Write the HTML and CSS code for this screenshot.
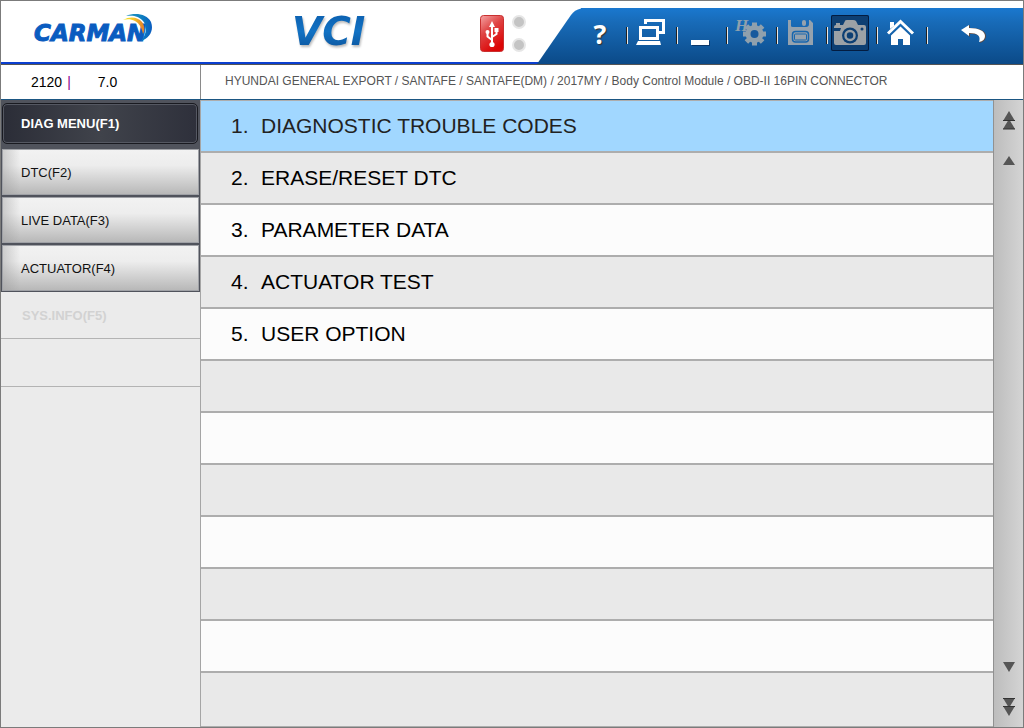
FILE: index.html
```html
<!DOCTYPE html>
<html lang="en">
<head>
<meta charset="utf-8">
<title>CARMAN VCI</title>
<link rel="stylesheet" href="styles.css">
</head>
<body>
<div class="app">
  <header class="header">
    <svg class="brand" width="124" height="34" viewBox="0 0 124 34" role="img" aria-label="CARMAN">
      <defs>
        <linearGradient id="arc" x1="0" x2="1"><stop offset="0" stop-color="#2a9bc4"/><stop offset=".6" stop-color="#0d7fc0"/><stop offset="1" stop-color="#0a5cc0"/></linearGradient>
        <linearGradient id="sun" x1="0" x2="1"><stop offset="0" stop-color="#f7ea1c"/><stop offset=".5" stop-color="#f6c52a"/><stop offset="1" stop-color="#e07b2c"/></linearGradient>
      </defs>
      <text class="brand-text" x="1" y="28">CARMAN</text>
      <path d="M93 3C102-1 114 1 118 9C121 17 117 25 108 28C113 22 115 14 110 8C106 3 100 2 93 3Z" fill="url(#arc)"/>
      <path d="M90 7C97 3 105 4 109 9C112 13 112 18 110 21C109 15 106 10 102 8C98 6 94 6 90 7Z" fill="url(#sun)"/>
    </svg>
    <svg class="product" width="88" height="44" viewBox="0 0 88 44" role="img" aria-label="VCI">
      <defs><linearGradient id="vci" x1="0" y1="0" x2="0" y2="1"><stop offset="0" stop-color="#0b5cab"/><stop offset=".5" stop-color="#1272c4"/><stop offset="1" stop-color="#0c4f94"/></linearGradient></defs>
      <text class="product-text" x="3" y="34" fill="url(#vci)">VCI</text>
    </svg>
    <div class="status">
      <svg width="24" height="37" viewBox="0 0 24 37" role="img" aria-label="USB connected">
        <defs><linearGradient id="usb" x1="0" y1="0" x2=".5" y2="1"><stop offset="0" stop-color="#f5a5a5"/><stop offset=".45" stop-color="#df4444"/><stop offset="1" stop-color="#dc0505"/></linearGradient></defs>
        <rect x=".5" y=".5" width="23" height="36" rx="3" fill="url(#usb)" stroke="#c93030"/>
        <g fill="none" stroke="#fff" stroke-width="2"><path d="M12 29V10M12 25L7.500 21.500V17M12 22L16.500 19V15"/></g>
        <path d="M12 6L15 12H9ZM14.500 13H18.500V17H14.500Z" fill="#fff"/>
        <circle cx="7.500" cy="17" r="2" fill="#fff"/><circle cx="12" cy="29.500" r="2.600" fill="#fff"/>
      </svg>
      <div class="lamps"><span class="lamp"></span><span class="lamp"></span></div>
    </div>
    <svg class="toolbar-cap" width="44" height="56" viewBox="0 0 44 56" aria-hidden="true">
      <defs><linearGradient id="cap" x1="0" y1="0" x2="0" y2="1"><stop offset="0" stop-color="#1a78cf"/><stop offset=".25" stop-color="#186bb8"/><stop offset="1" stop-color="#0b4a88"/></linearGradient></defs>
      <path d="M0 56L34 7Q39 0 50 0V56Z" fill="url(#cap)"/>
    </svg>
    <nav class="toolbar" aria-label="Tools">
      <button class="tool tool-help" aria-label="Help">?</button>
      <span class="sep"></span>
      <button class="tool" aria-label="Connection">
        <svg width="38" height="36" viewBox="0 0 38 36"><g fill="none" stroke="#fff" stroke-width="3"><path d="M14.500 9V5.500H32.500V17.500H28"/><path d="M9.500 12.500H26.500V23.500H9.500Z"/></g><path d="M7 26H29L30 30H5Z" fill="#fff"/></svg>
      </button>
      <span class="sep"></span>
      <button class="tool" aria-label="Minimize"><svg width="38" height="36" viewBox="0 0 38 36"><path d="M11 26H29V31H11Z" fill="#0a376a"/><path d="M10 25H28V30H10Z" fill="#fff"/></svg></button>
      <span class="sep"></span>
      <button class="tool" aria-label="Settings" disabled>
        <svg width="38" height="36" viewBox="0 0 38 36"><path class="gear-teeth" d="M23.500 7.500V30.500M12 19H35M15.400 10.900L31.600 27.100M15.400 27.100L31.600 10.900"/><circle cx="23.500" cy="19" r="6.500" fill="none" stroke="#8fa0ad" stroke-width="5"/><circle cx="23.500" cy="19" r="4" fill="#16599d"/><text class="tool-h" x="4" y="16">H</text></svg>
      </button>
      <span class="sep"></span>
      <button class="tool" aria-label="Save" disabled>
        <svg width="38" height="36" viewBox="0 0 38 36"><path d="M7 5H10V11Q10 12 12 12H25Q28 12 28 9V5H29L32 8V30H7Z" fill="#95a2ae"/><rect x="21" y="5" width="4" height="6" rx="2" fill="#95a2ae"/><rect x="11.500" y="16.500" width="16" height="10.500" rx="3" fill="none" stroke="#1766ae" stroke-width="1.500"/><rect x="13.500" y="19" width="12" height="6" rx="1" fill="#95a2ae" stroke="#1766ae"/></svg>
      </button>
      <span class="sep"></span>
      <button class="tool tool-on" aria-label="Capture" aria-pressed="true">
        <svg width="38" height="36" viewBox="0 0 38 36"><path d="M3 12Q3 10 5 10H12L14 6Q14 5 16 5H22Q24 5 25 6L27 10H33Q35 10 35 12V28Q35 30 33 30H5Q3 30 3 28V16H9L10 13H3Z" fill="#9ba1a6"/><path d="M5 8H9V10H5Z" fill="#9ba1a6"/><circle cx="19" cy="20.500" r="8" fill="#0d3f73"/><circle cx="19" cy="20.500" r="4.500" fill="#0d3f73" stroke="#9ba1a6" stroke-width="2.500"/><circle cx="31" cy="14" r="1.500" fill="#0d3f73"/></svg>
      </button>
      <span class="sep"></span>
      <button class="tool" aria-label="Home">
        <svg width="38" height="36" viewBox="0 0 38 36"><path d="M9 7H13V11L9 14Z" fill="#fff"/><path d="M7 18.500L19.500 6.500L32 18.500" fill="none" stroke="#fff" stroke-width="3"/><path d="M19.500 11.500L29 20.500V30H22V24H17V30H10V20.500Z" fill="#fff"/></svg>
      </button>
      <span class="sep"></span>
      <button class="tool tool-back" aria-label="Back">
        <svg width="38" height="36" viewBox="0 0 38 36"><path d="M8 15L16 10V13C26 13 32 16 32 21Q32 26 26 28Q28 18 16 19V22Z" fill="#5d4a42"/><path d="M7 15L15 10V13C25 13 31 16 31 21Q31 26 25 27Q28 18 15 18V21Z" fill="#fff"/></svg>
      </button>
    </nav>
  </header>

  <div class="info">
    <div class="version"><span>2120</span><span class="bar">|</span><span class="rev">7.0</span></div>
    <div class="path">HYUNDAI GENERAL EXPORT / SANTAFE / SANTAFE(DM) / 2017MY / Body Control Module / OBD-II 16PIN CONNECTOR</div>
  </div>

  <div class="body">
    <nav class="side" aria-label="Functions">
      <div class="side-group">
        <button class="key key-on">DIAG MENU(F1)</button>
        <button class="key">DTC(F2)</button>
        <button class="key">LIVE DATA(F3)</button>
        <button class="key">ACTUATOR(F4)</button>
      </div>
      <button class="slot slot-first" disabled>SYS.INFO(F5)</button>
      <div class="slot"></div>
    </nav>
    <main class="list">
      <button class="row row-on"><span class="num">1.</span>DIAGNOSTIC TROUBLE CODES</button>
      <button class="row"><span class="num">2.</span>ERASE/RESET DTC</button>
      <button class="row"><span class="num">3.</span>PARAMETER DATA</button>
      <button class="row"><span class="num">4.</span>ACTUATOR TEST</button>
      <button class="row"><span class="num">5.</span>USER OPTION</button>
      <div class="row"></div><div class="row"></div><div class="row"></div><div class="row"></div>
      <div class="row"></div><div class="row"></div><div class="row"></div>
    </main>
    <div class="scroll">
      <button class="arrow" aria-label="First"><svg width="12" height="19" viewBox="0 0 12 19"><path d="M6 0L12 10H0Z"/><path d="M6 8L12 18H0Z"/><path class="edge" d="M0 9.500H12M0 18H12"/></svg></button>
      <button class="arrow" aria-label="Up"><svg width="12" height="9" viewBox="0 0 12 9"><path d="M6 0L12 9H0Z"/></svg></button>
      <button class="arrow arrow-down" aria-label="Down"><svg width="12" height="10" viewBox="0 0 12 10"><path d="M0 0H12L6 10Z"/></svg></button>
      <button class="arrow" aria-label="Last"><svg width="12" height="18" viewBox="0 0 12 18"><path d="M0 0H12L6 10Z"/><path d="M0 8H12L6 18Z"/><path class="edge" d="M0 .5H12M0 8.500H12"/></svg></button>
    </div>
  </div>
</div>
</body>
</html>
```
FILE: styles.css
```css
* { box-sizing: border-box; }
body { margin: 0; font-family: "Liberation Sans", Arial, sans-serif; color: #000; }
button { margin: 0; padding: 0; border: 0; border-radius: 0; background: none; font: inherit; color: inherit; text-align: left; }
svg { display: block; }

.app { min-height: 100vh; display: flex; flex-direction: column; border: 1px solid #7b7b7b; }

.header { display: flex; height: 63px; padding-top: 7px; background: linear-gradient(#0b3fd0, #0b3fd0) left bottom / 100% 2px no-repeat #fff; }
.brand { margin: 5px 0 0 32px; }
.brand-text { font: italic bold 23px "DejaVu Sans", sans-serif; fill: #0a5cc0; stroke: #0a5cc0; stroke-width: 1px; }
.product { margin: 3px 0 0 132px; filter: drop-shadow(1px 2px 1px #bbb); }
.product-text { font: italic bold 39px "DejaVu Sans", sans-serif; }
.status { display: flex; gap: 8px; margin: 7px auto 0 103px; }
.lamps { display: flex; flex-direction: column; gap: 9px; }
.lamp { width: 14px; height: 14px; border: 2px solid #e6e6e6; border-radius: 50%; background: #c4c4c4; }
.toolbar-cap { flex: none; }
.toolbar { display: flex; height: 56px; padding: 7px 31px 0 0; background: linear-gradient(#1a78cf, #186bb8 25%, #0b4a88); }
.tool { width: 38px; height: 36px; }
.tool-help { font: bold 27px "Open Sans", sans-serif; color: #fff; text-align: center; text-shadow: 1px 1px 1px #333; }
.tool-on { border-radius: 2px; background: #0d3f73; box-shadow: inset 0 0 0 1px #031c40; }
.tool-h { font: italic bold 17px "Liberation Serif", serif; fill: #8fa0ad; }
.gear-teeth { fill: none; stroke: #8fa0ad; stroke-width: 5px; }
.tool-back { margin-left: 23px; }
.sep { width: 2px; height: 17px; margin: 12px 3px 0 7px; border-left: 1px solid #222; background: #e8e8e8; }

.info { display: flex; height: 36px; border-top: 1px solid #555; border-bottom: 1px solid #1b5682; background: #fff; }
.version { display: flex; align-items: center; width: 200px; padding-left: 30px; border-right: 1px solid #8a8a8a; font-size: 14px; }
.bar { margin-left: 5px; color: #8b008b; }
.rev { margin-left: 27px; }
.path { flex: 1; padding-left: 24px; font-size: 12px; line-height: 32px; color: #555; }

.body { flex: 1; display: flex; }
.side { width: 200px; border-right: 1px solid #a5a5a5; background: #ebebeb; }
.side-group { padding: 3px 1px 1px; display: flex; flex-direction: column; gap: 2px; background: #50535c; }
.key { height: 46px; padding-left: 18px; border: 1px solid #9fa1a6; background: linear-gradient(90deg, rgba(150, 150, 150, .4), rgba(150, 150, 150, 0) 9%), linear-gradient(#f2f2f2, #ededed 35%, #b8b8b8); font-size: 13px; color: #111; }
.key-on { height: 41px; margin: 0 1px 3px 0; border: 1px solid #191a20; border-radius: 5px; box-shadow: inset 0 0 0 1px #555862; background: linear-gradient(90deg, #2b2d37, #40434b 50%, #2e303b); font-weight: bold; color: #fff; }
.slot { display: block; width: 100%; height: 48px; padding-left: 21px; border-bottom: 1px solid #b3b3b3; font-size: 13px; font-weight: bold; color: #d2d2d2; }
.slot-first { height: 47px; }

.list { flex: 1; display: flex; flex-direction: column; border-top: 1px solid #adadad; }
.row { height: 52px; display: flex; align-items: center; padding-left: 30px; border-bottom: 2px solid #adadad; background: #fcfcfc; font-size: 21px; }
.row:nth-child(even) { background: #e9e9e9; }
.row:last-child { flex: 1 0 52px; border-bottom-width: 1px; }
.row-on { background: #a1d7ff; color: #222; }
.num { width: 30px; }

.scroll { display: flex; flex-direction: column; align-items: center; gap: 26px; width: 30px; padding: 11px 0; border-left: 1px solid #919191; background: linear-gradient(90deg, #bdbdbd, #d4d4d4); }
.arrow { fill: #555; }
.arrow .edge { stroke: #333; stroke-width: 1px; }
.arrow-down { margin-top: auto; }
```
